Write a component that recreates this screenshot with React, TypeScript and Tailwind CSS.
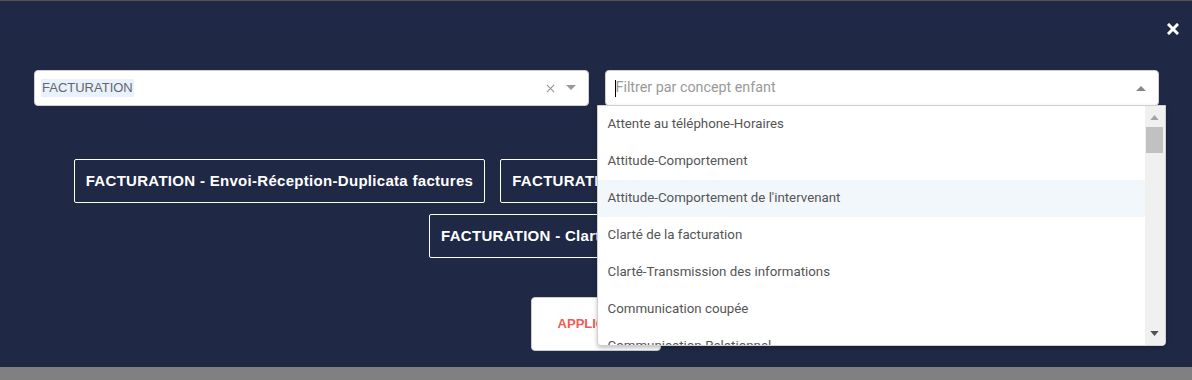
import React from 'react';

const options = [
  'Attente au téléphone-Horaires',
  'Attitude-Comportement',
  "Attitude-Comportement de l'intervenant",
  'Clarté de la facturation',
  'Clarté-Transmission des informations',
  'Communication coupée',
  'Communication-Relationnel',
];

const tags = [
  'FACTURATION - Envoi-Réception-Duplicata factures',
  "FACTURATION - Attitude-Comportement de l'intervenant - Délai de traitement dû",
  'FACTURATION - Clarté de la facture reçue',
];

const App: React.FC = () => {
  return (
    <div className="w-[1192px] h-[380px] flex flex-col overflow-hidden font-['Roboto',sans-serif]">
      <div className="h-px bg-[#55554c]" />
      <div className="relative flex-1 bg-[#1f2946] px-[34px] pr-[33px] pt-[69px]">
        {/* close */}
        <button className="absolute top-[22px] right-[13px] w-3 h-3">
          <svg viewBox="0 0 12 12" className="w-3 h-3">
            <path d="M2 2 L10 10 M10 2 L2 10" stroke="#fff" strokeWidth="3" strokeLinecap="square" />
          </svg>
        </button>

        {/* selects */}
        <div className="grid grid-cols-2 gap-4">
          <div className="h-[36px] bg-white rounded border border-[#cfcfcf] flex items-center pl-[6px] pr-3">
            <span className="bg-[#e8f2fe] text-[#666] text-[13px] font-['Liberation_Sans',sans-serif] px-px leading-[18px]">FACTURATION</span>
            <div className="ml-auto flex items-center gap-[11px]">
              <svg viewBox="0 0 10 10" className="w-[9px] h-[9px]">
                <path d="M1 1 L9 9 M9 1 L1 9" stroke="#999" strokeWidth="1.3" />
              </svg>
              <svg viewBox="0 0 10 6" className="w-[10px] h-[6px]">
                <path d="M0 0 L10 0 L5 5 Z" fill="#999" />
              </svg>
            </div>
          </div>
          <div className="relative">
            <div className="h-[36px] bg-white rounded border border-[#cfcfcf] flex items-center pl-[9px] pr-[12px]">
              <span className="w-px h-[17px] bg-black" />
              <span className="text-[14.3px] text-[#999]">Filtrer par concept enfant</span>
              <svg viewBox="0 0 10 6" className="ml-auto w-[10px] h-[6px]">
                <path d="M0 6 L10 6 L5 1 Z" fill="#888" />
              </svg>
            </div>
            {/* dropdown */}
            <div className="absolute left-[-8px] top-[35px] w-[569px] h-[241px] bg-white border border-[#d0d0d0] rounded-b shadow-[0_2px_4px_rgba(0,0,0,0.25)] z-20 flex overflow-hidden">
              <ul className="flex-1">
                {options.map((o, i) => (
                  <li
                    key={o}
                    className={`h-[37px] flex items-center pl-[10px] pb-[2px] text-[13.3px] text-[#555] ${i === 2 ? 'bg-[#f2f7fc]' : ''}`}
                  >
                    {o}
                  </li>
                ))}
              </ul>
              <div className="w-[20px] bg-[#f0f0f0] flex flex-col items-center">
                <svg viewBox="0 0 10 6" className="mt-[9px] w-[9px] h-[5px]">
                  <path d="M0 6 L10 6 L5 0 Z" fill="#a3a3a3" />
                </svg>
                <div className="mt-[7px] w-[17px] h-[26px] bg-[#c1c1c1]" />
                <svg viewBox="0 0 10 6" className="mt-auto mb-[9px] w-[9px] h-[5px]">
                  <path d="M0 0 L10 0 L5 6 Z" fill="#505050" />
                </svg>
              </div>
            </div>
          </div>
        </div>

        {/* tags */}
        <div className="mt-[53px] flex flex-wrap justify-center gap-x-[15px] gap-y-[11px]">
          {tags.map((t) => (
            <div
              key={t}
              className="h-[44px] border border-white rounded-[2px] px-[11px] flex items-center text-white font-bold text-[15px] tracking-[0.3px] font-['Liberation_Sans',sans-serif] whitespace-nowrap"
            >
              {t}
            </div>
          ))}
        </div>

        {/* apply */}
        <div className="mt-[39px] flex justify-center">
          <button className="w-[130px] h-[54px] -ml-[2px] bg-white rounded border border-[#ccc] text-[#f45a52] font-bold text-[13px] font-['Liberation_Sans',sans-serif]">
            APPLIQUER
          </button>
        </div>
      </div>
      <div className="h-[13px] bg-[#808080]" />
    </div>
  );
};

export default App;
